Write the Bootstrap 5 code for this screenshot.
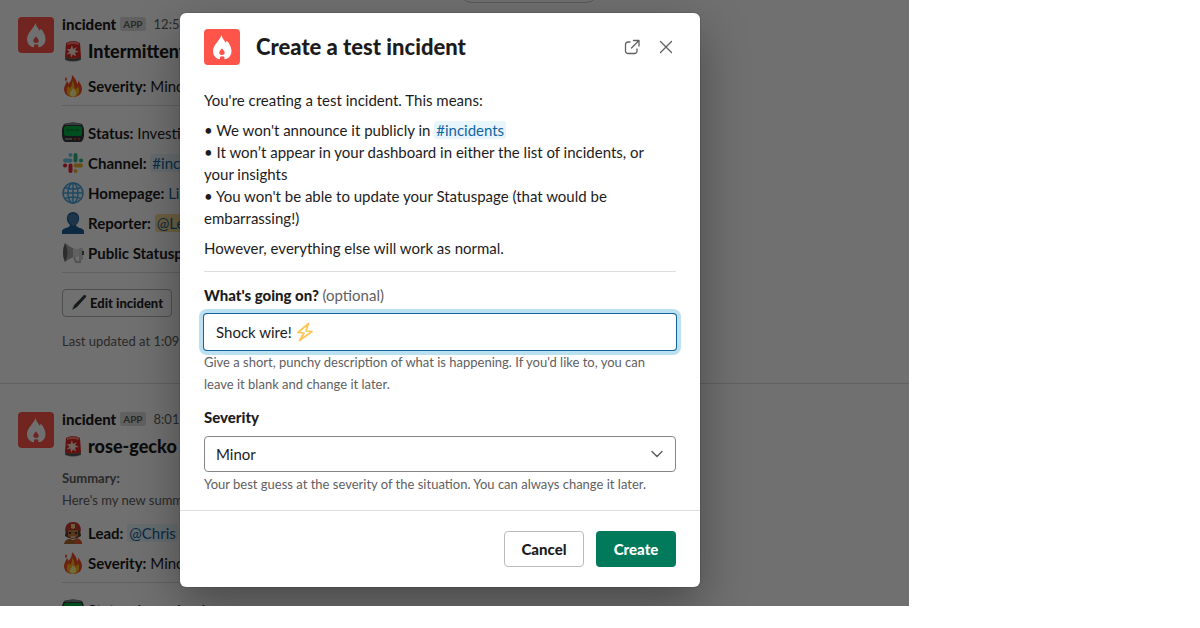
<!DOCTYPE html>
<html lang="en">
<head>
<meta charset="utf-8">
<meta name="viewport" content="width=device-width, initial-scale=1">
<title>Create a test incident</title>
<link href="https://cdn.jsdelivr.net/npm/bootstrap@5.3.0/dist/css/bootstrap.min.css" rel="stylesheet">
<style>
  body { font-family: Lato, sans-serif; font-size: 15px; line-height: 22px; color: #1d1c1d; background: #fff; }
  h2, h3, p { margin: 0; }
  hr { margin: 0; border: 0; border-top: 1px solid #dddddd; opacity: 1; }
  a { color: #1264a3; text-decoration: none; }
  .workspace { width: 75.75%; height: calc(100vh - 22px); }
  .message { padding: 13px 20px 31px 18px; }
  .message + .message { border-top: 1px solid #ddd; padding-top: 24px; }
  .message-body { max-width: 600px; }
  .avatar { width: 36px; height: 36px; flex: none; }
  .message .avatar { margin-top: 4px; }
  .sender { font-weight: 900; }
  .app-tag { font-size: 10px; font-weight: 700; line-height: 14px; padding: 0 3px; border-radius: 2px; background: #ddd; color: #616061; }
  .stamp, .note { font-size: 13px; color: #616061; }
  .headline { font-size: 18px; font-weight: 900; line-height: 22px; margin-top: 5px; }
  .headline + .line-item { margin-top: 13px; }
  .emoji { width: 22px; height: 22px; flex: none; }
  .line-item { display: flex; gap: 4px; white-space: nowrap; height: 22px; }
  .rule { margin: 8px 0 16px; }
  .facts { display: grid; gap: 8px; }
  .summary { margin: 10px 0 11px; }
  .updated { margin-top: 13px; }
  .mention { background: #e8f5fa; border-radius: 3px; padding: 0 2px; }
  .mention-me { background: #f9dd98; }
  .btn-edit { font-size: 13px; font-weight: 900; line-height: 20px; padding: 3px 8px; border: 1px solid #b4b4b4; border-radius: 4px; height: 28px; gap: 3px; }
  .date-pill { top: -25px; left: 458px; width: 142px; height: 28px; border: 1px solid #ccc; background: #fff; }
  .shade { background: rgba(0,0,0,.56); padding: 13px 24px 0 180px; }
  .dialog { max-width: 520px; border-radius: 6px; background: #fff; box-shadow: 0 0 0 1px rgba(29,28,29,.13), 0 18px 48px rgba(0,0,0,.35); }
  .dialog-top { padding: 16px 25px 0 24px; }
  .dialog-top h2 { font-size: 22px; font-weight: 900; line-height: 30px; }
  .icon-btn { border: 0; background: none; padding: 0; width: 18px; height: 18px; display: flex; color: #616061; }
  .dialog-main { padding: 24px 24px 15px; }
  .dialog-main hr { margin: 12px 0; }
  .field-label { font-weight: 900; margin-bottom: 8px; display: block; }
  .note + .field-label { margin-top: 11px; }
  .field-label span { font-weight: 400; color: #616061; }
  .text-field { height: 36px; padding: 0 12px; gap: 3px; border-radius: 3px; box-shadow: 0 0 0 1px #1264a3, 0 0 0 5px rgba(29,155,209,.3); }
  .text-field input { border: 0; padding: 0; outline: 0; width: 77px; color: inherit; background: none; }
  .select-field { height: 36px; padding: 0 36px 0 11px; font-size: 15px; color: #1d1c1d; border: 1px solid #868686; border-radius: 4px; background-position: right 11px center; background-size: 14px 14px;
    background-image: url("data:image/svg+xml,%3Csvg xmlns='http://www.w3.org/2000/svg' viewBox='0 0 14 14'%3E%3Cpath d='M2 4.5l5 5 5-5' fill='none' stroke='%23616061' stroke-width='1.5' stroke-linecap='round' stroke-linejoin='round'/%3E%3C/svg%3E"); }
  .note { margin-top: 1px; }
  .dialog-end { border-top: 1px solid #ddd; padding: 20px 24px; gap: 12px; }
  .dialog-end .btn { width: 80px; height: 36px; padding: 0; font-size: 15px; font-weight: 900; border-radius: 4px; }
  .btn-cancel, .btn-cancel:hover { border: 1px solid #bbb; background: #fff; color: #1d1c1d; }
  .btn-create, .btn-create:hover { background: #007a5a; color: #fff; border: 0; }
</style>
</head>
<body>
<svg width="0" height="0" class="position-absolute" aria-hidden="true">
  <symbol id="logo" viewBox="0 0 36 36"><rect width="36" height="36" rx="4" fill="#ff5449"/><path fill="#fff" d="M17.500 6C18 6 17.500 7.500 19.500 10.500C20.500 12 21.500 13 22 14C22.300 12.800 22.300 12 22.700 12C23.500 12 27.500 17 27.500 22C27.500 27 24 30.500 18.200 30.500C12.500 30.500 9 27 9 22C9 16 16 11 17.500 6Z"/><path fill="#ff5449" d="M18 19.200c.4 1.300 2.700 2.600 2.700 4.400a2.700 2.500 0 0 1-5.400 0c0-1.800 2-3 2.700-4.400zM16 31v-3.200q2.200-1.300 4.400 0V31z"/></symbol>
  <symbol id="siren" viewBox="0 0 22 22"><path fill="#777" d="M3 17h16v3q-8 3-16 0z"/><path fill="#403c3c" d="M4 18q7 3 14 0v1q-7 3-14 0z"/><path fill="#dc2922" d="M4 3q7-4 14 0l1 14q-8 3-16 0z"/><path fill="#ff7b70" d="M5 3q6-3 12 0v2q-6-2-12 0z"/><path fill="#ffe4de" d="M10 5l1 4 4-2-2 3 4 2-4 .5 1 4-3-2-2 3-.5-4-4 1 3-3-3-2 4-.5z"/></symbol>
  <symbol id="fire" viewBox="0 0 22 22"><path fill="#f44b22" d="M10 0c3 3 5 6 5 9 2-1 1-4 1-4 2 3 4 6 4 9 0 5-4 8-9 8s-9-3-9-8c0-3 2-5 3-8 1 1 1 2 1 3 3-2 4-5 4-9z"/><path fill="#ffb31f" d="M10 6c3 3 2 6 3 8 2 0 3-2 3-3 3 6 0 11-5 11-4 0-7-3-6-7 0-2 1-3 1-4l2 2c2-2 2-4 2-7z"/><path fill="#fff39a" d="M11 12c0 3 4 3 3 7-1 4-7 3-6-1 0-2 3-3 3-6z"/><path fill="#f44b22" d="M4 2q2 2 0 4-2-1 0-4z"/></symbol>
  <symbol id="screen" viewBox="0 0 22 22"><path fill="#34383b" d="M2 2q9-3 18 0 3 5 2 12-1 6-4 6H4q-3 0-4-6Q-1 7 2 2z"/><path fill="#7d8589" d="M2 2q9-3 18 0l-1 1H3z"/><rect x="2" y="4" width="18" height="10" rx="2" fill="#00af45"/><path stroke="#006d2b" d="M4 8h3m1 0h4m1 0h4"/><path stroke="#ccc" d="M3 17h7"/><circle cx="13" cy="17" r="1" fill="#e42"/><circle cx="17" cy="17" r="1" fill="#e42"/></symbol>
  <symbol id="hash" viewBox="0 0 22 22"><g stroke-width="4" stroke-linecap="round"><path stroke="#69c5ea" d="M8.500 3v.1M3 8.500h5.500"/><path stroke="#2eb67d" d="M13.500 3v5.500m5.500 0h.1"/><path stroke="#ecb22e" d="M13.500 13.500H19m-5.500 5.500v.1"/><path stroke="#e0233a" d="M8.500 13.500V19M3 13.500h.1"/></g></symbol>
  <symbol id="globe" viewBox="0 0 22 22"><circle cx="11" cy="11" r="10" fill="#eaf5fc"/><g fill="none" stroke="#4aa5dc" stroke-width="1.500"><circle cx="11" cy="11" r="10"/><ellipse cx="11" cy="11" rx="5" ry="10"/><path d="M11 1v20M1 11h20M3 5.500q8 3 16 0M3 16.500q8-3 16 0"/></g></symbol>
  <symbol id="person" viewBox="0 0 22 22"><path fill="#1e5f94" d="M0 22v-3c0-3 8-3 8-6C3 9 4 0 11 0s8 9 3 13c0 3 8 3 8 6v3z"/><path fill="#487ca9" d="M6 4q5-5 10 0v5q-3 5-5 5Q6 11 6 4z"/></symbol>
  <symbol id="horn" viewBox="0 0 22 22"><path fill="none" stroke="#bbb" stroke-width="2" d="M12 15l2 5h4v-6"/><path fill="#a8a8a8" d="M3 1q7 6 15 7v6q-8 0-15 6-4-9 0-19z"/><path fill="#ddd" d="M11 6q4 2 7 2v6l-7 1z"/><path fill="#666" d="M3 1q5 10 0 19-4-9 0-19z"/><rect x="17" y="6" width="4" height="12" rx="1" fill="#d0d0d0"/><path fill="#555" d="M20 9h2v4h-2z"/></symbol>
  <symbol id="pen" viewBox="0 0 16 16"><path fill="#363b3d" d="M1 15l2-5L13 0q3 0 2 2L6 12z"/><path fill="none" stroke="#b8c3c5" d="M1 15l2-5L10 3"/></symbol>
  <symbol id="lead" viewBox="0 0 22 22"><path fill="#603b34" d="M4 7h14l1 7q-8 6-16 0z"/><path fill="#ca7d3d" d="M6 8h10v6q-5 6-10 0z"/><path fill="#c8392e" d="M3 9q0-9 8-9t8 9q-8-3-16 0z"/><path fill="#f5d98c" d="M9 2h4v4l-2 1-2-1z"/><path fill="#aa682c" d="M2 22q1-5 6-5l3 1 4-1q5 1 5 5z"/><path fill="#e45835" d="M14 16q6 1 6 6h-8z"/><path stroke="#fff" d="M9 15h4"/><path stroke="#333" stroke-width="2" d="M7 11h2m4 0h2"/></symbol>
</svg>

<div class="workspace position-relative overflow-hidden">
  <div class="date-pill position-absolute rounded-pill"></div>
  <article class="message d-flex gap-2">
    <svg class="avatar"><use href="#logo"/></svg>
    <div class="message-body flex-grow-1">
      <div class="d-flex align-items-center gap-1"><span class="sender">incident</span><span class="app-tag">APP</span><span class="stamp ms-1">12:59</span></div>
      <h3 class="headline line-item"><svg class="emoji"><use href="#siren"/></svg>Intermittent</h3>
      <div class="line-item"><svg class="emoji"><use href="#fire"/></svg><span><b>Severity:</b> Minor</span></div>
      <hr class="rule">
      <div class="facts">
        <div class="line-item"><svg class="emoji"><use href="#screen"/></svg><span><b>Status:</b> Investigating</span></div>
        <div class="line-item"><svg class="emoji"><use href="#hash"/></svg><span><b>Channel:</b> <a href="#" class="mention">#inc</a></span></div>
        <div class="line-item"><svg class="emoji"><use href="#globe"/></svg><span><b>Homepage:</b> <a href="#">Link</a></span></div>
        <div class="line-item"><svg class="emoji"><use href="#person"/></svg><span><b>Reporter:</b> <a href="#" class="mention mention-me">@Leo</a></span></div>
        <div class="line-item"><svg class="emoji"><use href="#horn"/></svg><span><b>Public Statuspage:</b></span></div>
      </div>
      <hr class="rule">
      <button type="button" class="btn btn-edit bg-white d-flex align-items-center"><svg width="16" height="16"><use href="#pen"/></svg>Edit incident</button>
      <p class="stamp updated">Last updated at 1:09</p>
    </div>
  </article>
  <article class="message d-flex gap-2">
    <svg class="avatar"><use href="#logo"/></svg>
    <div class="message-body flex-grow-1">
      <div class="d-flex align-items-center gap-1"><span class="sender">incident</span><span class="app-tag">APP</span><span class="stamp ms-1">8:01</span></div>
      <h3 class="headline line-item"><svg class="emoji"><use href="#siren"/></svg>rose-gecko</h3>
      <p class="stamp summary"><b>Summary:</b><br>Here's my new summary</p>
      <div class="facts">
        <div class="line-item"><svg class="emoji"><use href="#lead"/></svg><span><b>Lead:</b> <a href="#" class="mention">@Chris</a></span></div>
        <div class="line-item"><svg class="emoji"><use href="#fire"/></svg><span><b>Severity:</b> Minor</span></div>
      </div>
      <hr class="rule">
      <div class="line-item"><svg class="emoji"><use href="#screen"/></svg><span><b>Status:</b> Investigating</span></div>
    </div>
  </article>

  <div class="shade position-absolute top-0 start-0 w-100 h-100">
    <form class="dialog" role="dialog" aria-labelledby="dialog-title">
      <header class="dialog-top d-flex align-items-center gap-3">
        <svg class="avatar"><use href="#logo"/></svg>
        <h2 id="dialog-title" class="flex-grow-1">Create a test incident</h2>
        <button type="button" class="icon-btn" aria-label="Open in new window"><svg viewBox="0 0 18 18" fill="none" stroke="currentColor" stroke-width="1.300" stroke-linecap="round" stroke-linejoin="round"><path d="M7 4H5A2.500 2.500 0 0 0 2.500 6.500V13A2.500 2.500 0 0 0 5 15.500h6.500A2.500 2.500 0 0 0 14 13v-2M10.500 2.500H16V8M16 2.500L8.500 10"/></svg></button>
        <button type="button" class="icon-btn" aria-label="Close"><svg viewBox="0 0 18 18" fill="none" stroke="currentColor" stroke-width="1.300" stroke-linecap="round"><path d="M3.500 3.500l11 11M14.500 3.500l-11 11"/></svg></button>
      </header>
      <div class="dialog-main">
        <p class="mb-2">You're creating a test incident. This means:</p>
        <p class="mb-2">• We won't announce it publicly in <a href="#" class="mention">#incidents</a><br>• It won’t appear in your dashboard in either the list of incidents, or your insights<br>• You won't be able to update your Statuspage (that would be embarrassing!)</p>
        <p>However, everything else will work as normal.</p>
        <hr>
        <label class="field-label" for="what">What's going on? <span>(optional)</span></label>
        <div class="text-field d-flex align-items-center">
          <input id="what" type="text" value="Shock wire!">
          <svg width="18" height="20" viewBox="0 0 18 20" fill="none" stroke="#ffc555" stroke-width="1.700" stroke-linejoin="round"><path d="M12.500 1.500L2 10.500l6 .5-4.500 7.500L16 9.500 10 9z"/></svg>
        </div>
        <p class="note">Give a short, punchy description of what is happening. If you'd like to, you can leave it blank and change it later.</p>
        <label class="field-label" for="severity">Severity</label>
        <select id="severity" class="form-select select-field"><option>Minor</option></select>
        <p class="note">Your best guess at the severity of the situation. You can always change it later.</p>
      </div>
      <footer class="dialog-end d-flex justify-content-end">
        <button type="button" class="btn btn-cancel">Cancel</button>
        <button type="submit" class="btn btn-create">Create</button>
      </footer>
    </form>
  </div>
</div>
<script src="https://cdn.jsdelivr.net/npm/bootstrap@5.3.0/dist/js/bootstrap.bundle.min.js"></script>
</body>
</html>
